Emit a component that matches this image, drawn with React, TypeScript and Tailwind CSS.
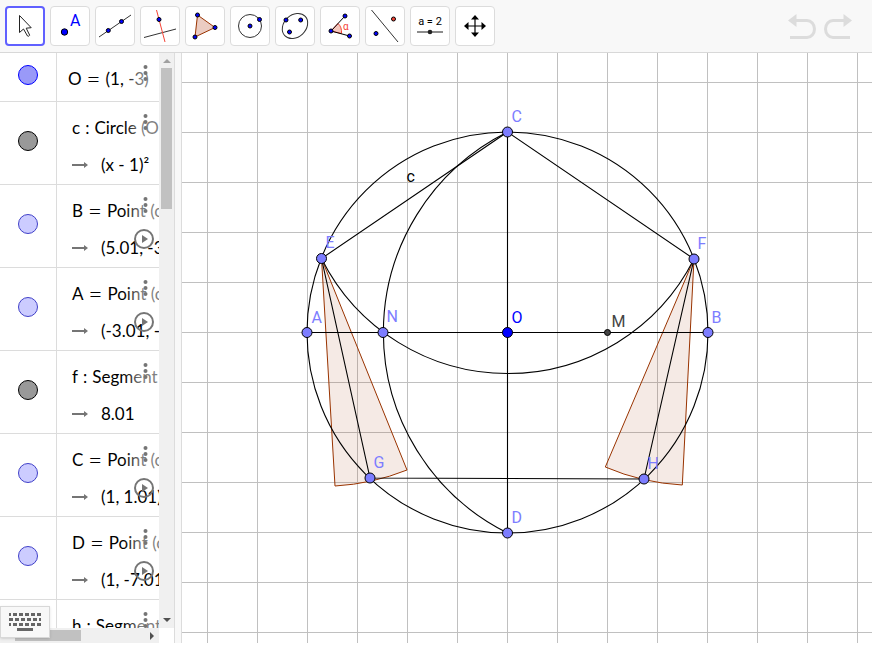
import { clsx } from "clsx"
import type { ReactNode } from "react"

type Row = {
  name: string
  relation: "=" | ":"
  definition: string
  value?: string
  marble: "blue" | "gray" | "light"
  playable?: boolean
}

const rows: Row[] = [
  { name: "O", relation: "=", definition: "(1, -3)", marble: "blue" },
  { name: "c", relation: ":", definition: "Circle (O, B)", value: "(x - 1)²", marble: "gray" },
  { name: "B", relation: "=", definition: "Point (c)", value: "(5.01, -3)", marble: "light", playable: true },
  { name: "A", relation: "=", definition: "Point (c)", value: "(-3.01, -3)", marble: "light", playable: true },
  { name: "f", relation: ":", definition: "Segment (A, B)", value: "8.01", marble: "gray" },
  { name: "C", relation: "=", definition: "Point (c)", value: "(1, 1.01)", marble: "light", playable: true },
  { name: "D", relation: "=", definition: "Point (c)", value: "(1, -7.01)", marble: "light", playable: true },
  { name: "h", relation: ":", definition: "Segment (C, D)", value: "8.01", marble: "gray" },
]

const marbles = {
  blue: "border-[#0000ff] bg-[#9999f8]",
  gray: "border-black bg-[#999999]",
  light: "border-[#4040c8] bg-[#ccccff]",
}

function Dot({ x, y, r = 2, fill = "#0000ff" }: { x: number; y: number; r?: number; fill?: string }) {
  return <circle cx={x} cy={y} r={r} fill={fill} stroke="#000" />
}

const tools: { name: string; icon: ReactNode }[] = [
  {
    name: "Move",
    icon: <path d="M14.500 9.500v17l4-3.500 4 7q1.200.8 2.200-.8l-3.500-7 5-.5z" fill="#fff" stroke="#222" />,
  },
  {
    name: "Point",
    icon: (
      <>
        <Dot x={14.5} y={26} r={3.2} />
        <text x="20" y="20" className="fill-[#0000ff] font-['Roboto',sans-serif] text-base">A</text>
      </>
    ),
  },
  {
    name: "Line",
    icon: (
      <>
        <path d="M4 31 36 9" stroke="#333" />
        <Dot x={13.3} y={24.5} />
        <Dot x={26.5} y={15.5} />
      </>
    ),
  },
  {
    name: "Perpendicular Line",
    icon: (
      <>
        <path d="M4 31.500 36 23" stroke="#333" />
        <path d="M16.500 4 25 36" stroke="#f44336" />
        <Dot x={19} y={13.5} />
      </>
    ),
  },
  {
    name: "Polygon",
    icon: (
      <>
        <path d="M12.500 9 30 21.500 10 31z" fill="#ebccc2" stroke="#993300" />
        <Dot x={12.5} y={9} />
        <Dot x={30} y={21.5} />
        <Dot x={10} y={31} />
      </>
    ),
  },
  {
    name: "Circle with Center",
    icon: (
      <>
        <circle cx="20" cy="20" r="11.500" fill="none" stroke="#333" />
        <Dot x={20} y={20} />
        <Dot x={29.5} y={13.5} />
      </>
    ),
  },
  {
    name: "Ellipse",
    icon: (
      <>
        <ellipse cx="20" cy="20" rx="14" ry="11" transform="rotate(-43 20 20)" fill="none" stroke="#333" />
        <Dot x={11} y={14} />
        <Dot x={25.7} y={14} />
        <Dot x={14.5} y={26} />
      </>
    ),
  },
  {
    name: "Angle",
    icon: (
      <>
        <path d="m11 25 7-7.500q4 3.500 3.500 10z" fill="#f6c8be" stroke="#f44336" />
        <path d="M25 10 11 25l18.500 5" fill="none" stroke="#000" />
        <Dot x={25} y={10} />
        <Dot x={11} y={25} />
        <Dot x={29.5} y={30} />
        <text x="23" y="24" className="fill-[#f44336] font-['Roboto',sans-serif] text-[10px]">α</text>
      </>
    ),
  },
  {
    name: "Reflect about Line",
    icon: (
      <>
        <path d="m6.500 4 26.500 32" stroke="#333" />
        <Dot x={11} y={27.5} />
        <Dot x={28.5} y={13} fill="#f44336" />
      </>
    ),
  },
  {
    name: "Slider",
    icon: (
      <>
        <text x="20" y="19" textAnchor="middle" className="fill-black font-['Roboto',sans-serif] text-[11px]">a = 2</text>
        <path d="M7 26h26" stroke="#666" strokeWidth="1.500" />
        <circle cx="20" cy="26" r="2.300" fill="#222" />
      </>
    ),
  },
  {
    name: "Move Graphics View",
    icon: (
      <>
        <path d="M20 12v16M12 20h16" stroke="#000" strokeWidth="1.200" />
        <path d="m20 9 4 4.500h-8zM20 31l4-4.500h-8zM9 20l4.500-4v8zM31 20l-4.500-4v8z" />
      </>
    ),
  },
]

function Toolbar() {
  return (
    <header className="flex h-[53px] shrink-0 items-center justify-between border-b border-[#d8d8d8] bg-[#f8f8f8] pr-5 pl-[5px]">
      <div className="flex gap-[5px]">
        {tools.map((tool, i) => (
          <button
            key={tool.name}
            aria-label={tool.name}
            className={clsx(
              "flex size-10 items-center justify-center rounded bg-white",
              i === 0 ? "border-2 border-[#6060ff]" : "border border-[#dcdcdc]",
            )}
          >
            <svg className="size-10 shrink-0">{tool.icon}</svg>
          </button>
        ))}
      </div>
      <div className="flex gap-2">
        <button aria-label="Undo">
          <UndoIcon />
        </button>
        <button aria-label="Redo">
          <UndoIcon className="-scale-x-100" />
        </button>
      </div>
    </header>
  )
}

function UndoIcon({ className }: { className?: string }) {
  return (
    <svg viewBox="0 0 28 26" className={clsx("h-[26px] w-7", className)}>
      <path d="M7 7.500h12a7.500 8.500 0 0 1 0 17H2" fill="none" stroke="#dcdcdc" strokeWidth="3" />
      <path d="M0 7.500 8.500 1v13z" fill="#dcdcdc" />
    </svg>
  )
}

function AlgebraRow({ row }: { row: Row }) {
  return (
    <div className={clsx("flex shrink-0 border-b border-[#dcdcdc]", row.value ? "h-[83px]" : "h-[49px]")}>
      <div className={clsx("w-[57px] shrink-0 border-r border-[#dcdcdc] pl-[18px]", row.value ? "pt-[29px]" : "pt-3")}>
        <button aria-label={`Show or hide ${row.name}`} className={clsx("block size-5 rounded-full border", marbles[row.marble])} />
      </div>
      <div className={clsx("relative flex-1 overflow-hidden whitespace-nowrap", row.value ? "pl-[15px]" : "pl-[11px]")}>
        <div className="flex gap-[5px] pt-[14px] leading-6">
          <span>{row.name}</span>
          <span className={clsx(row.relation === "=" && "text-2xl/6 font-light")}>{row.relation}</span>
          <span>{row.definition}</span>
        </div>
        {row.value && (
          <div className="mt-[13px] flex items-center gap-[13px] leading-6">
            <svg className="h-2 w-4 shrink-0 fill-[#757575]">
              <path d="M0 3h12V1l4 3-4 3V5H0z" />
            </svg>
            <span>{row.value}</span>
          </div>
        )}
        <div className="absolute top-0 right-0 flex h-10 w-9 items-start justify-center bg-gradient-to-r from-white/0 via-white/50 to-white/50 pt-3 pl-2">
          <button aria-label="More">
            <svg className="h-4 w-[5px] fill-[#757575]">
              <circle cx="2.500" cy="2" r="2" />
              <circle cx="2.500" cy="8" r="2" />
              <circle cx="2.500" cy="14" r="2" />
            </svg>
          </button>
        </div>
        {row.playable && (
          <button aria-label="Play" className="absolute top-11 right-[5px]">
            <svg className="size-5">
              <circle cx="10" cy="10" r="9" fill="none" stroke="#757575" strokeWidth="2" />
              <path d="m8 6 6 4-6 4z" fill="#757575" />
            </svg>
          </button>
        )}
      </div>
    </div>
  )
}

function AlgebraView() {
  return (
    <aside className="relative flex w-[175px] shrink-0 flex-col border-r border-[#dcdcdc]">
      <div className="flex min-h-0 flex-1">
        <div className="flex min-w-0 flex-1 flex-col overflow-hidden font-['Lato',sans-serif] text-[17px] text-black">
          {rows.map((row) => (
            <AlgebraRow key={row.name} row={row} />
          ))}
        </div>
        <div className="flex w-[15px] flex-col items-center justify-between bg-[#f0f0f0] py-1.5">
          <div className="flex flex-col items-center gap-[5px]">
            <svg className="h-1 w-2 fill-[#a0a0a0]">
              <path d="M0 4 4 0l4 4z" />
            </svg>
            <div className="h-[141px] w-[11px] bg-[#c1c1c1]" />
          </div>
          <svg className="h-1 w-2 fill-[#505050]">
            <path d="M0 0h8L4 4z" />
          </svg>
        </div>
      </div>
      <div className="mr-[15px] flex h-[15px] shrink-0 items-center justify-between bg-[#f0f0f0] pr-[5px] pl-[15px]">
        <div className="h-[11px] w-[66px] bg-[#c1c1c1]" />
        <svg className="h-2 w-1 fill-[#505050]">
          <path d="m0 0 4 4-4 4z" />
        </svg>
      </div>
      <button
        aria-label="Open keyboard"
        className="absolute bottom-[5px] left-0 flex h-8 w-[50px] items-center justify-center border border-[#d8d8d8] bg-[#f8f8f8] shadow-sm"
      >
        <svg className="h-[18px] w-8" stroke="#666" strokeWidth="3">
          <path d="M0 1.500h32" strokeDasharray="2 2 4 2 4 2 4 2 4 2 4" />
          <path d="M0 6.500h32" strokeDasharray="4 2" />
          <path d="M0 11.500h32" strokeDasharray="2 2 4 2 4 2 4 2 4 2 4" />
          <path d="M8 16.500h16" />
        </svg>
      </button>
    </aside>
  )
}

// Coordinates are relative to O, 50 px per grid square.
const points = [
  { name: "A", x: -200.5, y: 0, lx: -196, ly: -10 },
  { name: "B", x: 200.5, y: 0, lx: 204, ly: -10 },
  { name: "C", x: 0, y: -200.5, lx: 4, ly: -211 },
  { name: "D", x: 0, y: 200.5, lx: 4, ly: 190 },
  { name: "N", x: -124.5, y: 0, lx: -121, ly: -11 },
  { name: "E", x: -186, y: -74, lx: -182, ly: -85 },
  { name: "F", x: 186.5, y: -73.5, lx: 190, ly: -84 },
  { name: "G", x: -137.5, y: 145.5, lx: -134, ly: 135 },
  { name: "H", x: 136.5, y: 146.5, lx: 140, ly: 136 },
]

function GraphicsView() {
  return (
    <main className="min-w-0 flex-1">
      <svg className="size-full font-['Roboto',sans-serif] text-base" role="img" aria-label="Graphics view">
        <defs>
          <pattern id="grid" x="25" y="29" width="50" height="50" patternUnits="userSpaceOnUse">
            <path d="M0 0h50v1H1v49H0z" fill="#c0c0c0" />
          </pattern>
        </defs>
        <rect width="100%" height="100%" fill="url(#grid)" />
        <g transform="translate(325.500 279.500)">
          <g fill="#993300" fillOpacity="0.100" stroke="#993300">
            <path d="M-186-74-172.500 153.500A228 228 0 0 0-100.500 137.500z" />
            <path d="M186.500-73.500 97.800 134.500A226 226 0 0 0 174.800 152.500z" />
          </g>
          <g fill="none" stroke="#000" strokeWidth="1.100">
            <circle r="200.500" />
            <path d="M0-200.500A224 224 0 0 0 0 200.500" />
            <path d="M-186-74A208.500 208.500 0 0 0 186.500-73.500" />
            <path d="M-200.500 0h401M0-200.500v401" />
            <path d="M-186-74 0-200.500 186.500-73.500 136.500 146.500-137.500 145.500z" />
          </g>
          {points.map((p) => (
            <g key={p.name}>
              <circle cx={p.x} cy={p.y} r="5" fill="#7d7dff" stroke="#000" />
              <text x={p.lx} y={p.ly} className="fill-[#7d7dff]">{p.name}</text>
            </g>
          ))}
          <circle r="5" fill="#0000ff" stroke="#000" />
          <text x="4" y="-10" className="fill-[#0000ff]">O</text>
          <circle cx="100" r="3" fill="#444" stroke="#000" />
          <text x="104" y="-6" className="fill-[#444444]">M</text>
          <text x="-101" y="-151" className="fill-black">c</text>
        </g>
      </svg>
    </main>
  )
}

export default function App() {
  return (
    <div className="flex h-screen flex-col overflow-hidden bg-white pr-px pb-0.5">
      <Toolbar />
      <div className="flex min-h-0 flex-1">
        <AlgebraView />
        <div className="w-[7px] shrink-0 border-r border-[#dcdcdc] bg-[#f8f8f8]" />
        <GraphicsView />
      </div>
    </div>
  )
}
